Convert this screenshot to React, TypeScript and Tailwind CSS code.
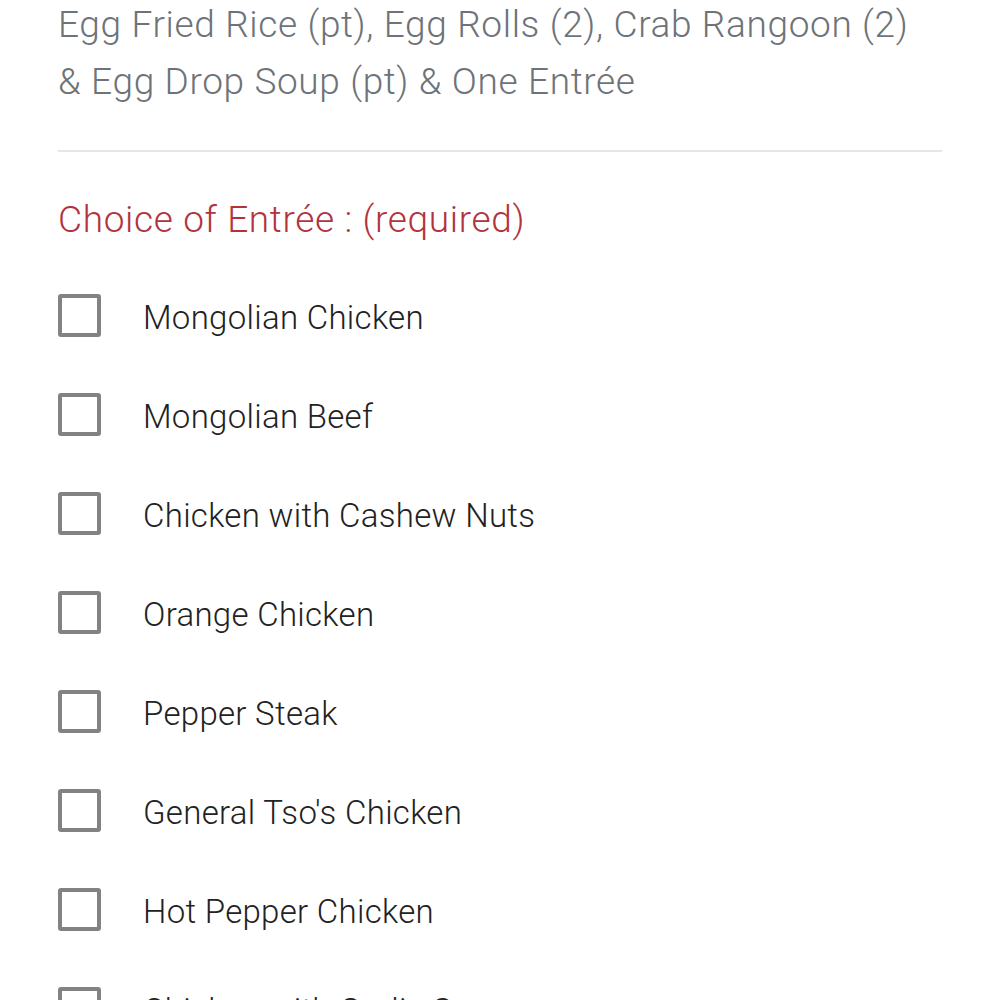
import React from "react";

const entrees = [
  "Mongolian Chicken",
  "Mongolian Beef",
  "Chicken with Cashew Nuts",
  "Orange Chicken",
  "Pepper Steak",
  "General Tso's Chicken",
  "Hot Pepper Chicken",
  "Chicken with Garlic Sauce",
];

function Checkbox() {
  return <div className="w-[43px] h-[43px] shrink-0 rounded-[3px] border-[4px] border-[#828282] bg-white" />;
}

export default function App() {
  return (
    <div className="w-[1000px] h-[1000px] overflow-hidden bg-white font-['Roboto',sans-serif] font-light">
      <div className="px-[58px]">
        {/* combo description */}
        <p className="-mt-[4px] text-[37px] leading-[57px] tracking-[0.65px] text-[#6d7378]">
          Egg Fried Rice (pt), Egg Rolls (2), Crab Rangoon (2)
          <br />
          &amp; Egg Drop Soup (pt) &amp; One Entrée
        </p>

        <div className="mt-[40px] h-[2px] bg-[#e6e6e6]" />

        <h2 className="mt-[46px] text-[37px] leading-[44px] tracking-[0.65px] text-[#b2333c]">
          Choice of Entrée : (required)
        </h2>

        <ul className="mt-[24px]">
          {entrees.map((name) => (
            <li key={name} className="flex h-[99px] items-center gap-[42px]">
              <Checkbox />
              <span className="mt-[5px] text-[33px] tracking-[0.3px] text-[#222222]">{name}</span>
            </li>
          ))}
        </ul>
      </div>
    </div>
  );
}
